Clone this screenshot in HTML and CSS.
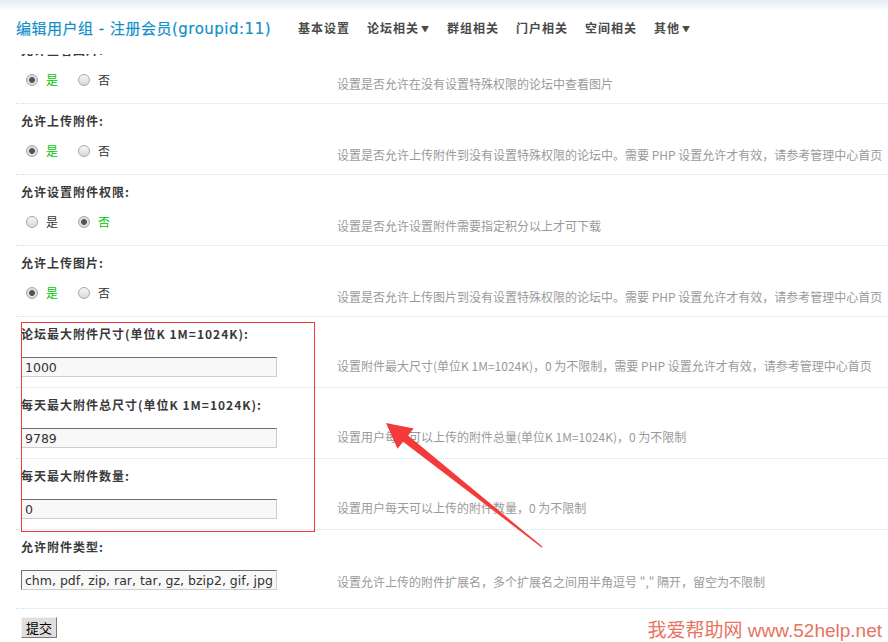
FILE: index.html
```html
<!DOCTYPE html>
<html lang="zh-CN">
<head>
<meta charset="utf-8">
<title>编辑用户组 - 注册会员</title>
<link rel="stylesheet" href="styles.css">
</head>
<body>
<header class="topbar">
  <h1 class="title">编辑用户组 - 注册会员(groupid:11)</h1>
  <nav class="nav">
    <a class="nav-item">基本设置</a>
    <a class="nav-item">论坛相关<span class="caret">▼</span></a>
    <a class="nav-item">群组相关</a>
    <a class="nav-item">门户相关</a>
    <a class="nav-item">空间相关</a>
    <a class="nav-item">其他<span class="caret">▼</span></a>
  </nav>
</header>

<main class="content">
  <form class="settings">
    <div class="setting setting--radio">
      <div class="setting-label">允许查看图片:</div>
      <div class="setting-value">
        <label class="radio is-on"><input type="radio" name="viewimg" checked><span>是</span></label>
        <label class="radio"><input type="radio" name="viewimg"><span>否</span></label>
      </div>
      <div class="setting-desc">设置是否允许在没有设置特殊权限的论坛中查看图片</div>
    </div>

    <div class="setting setting--radio">
      <div class="setting-label">允许上传附件:</div>
      <div class="setting-value">
        <label class="radio is-on"><input type="radio" name="postattach" checked><span>是</span></label>
        <label class="radio"><input type="radio" name="postattach"><span>否</span></label>
      </div>
      <div class="setting-desc">设置是否允许上传附件到没有设置特殊权限的论坛中。需要 PHP 设置允许才有效，请参考管理中心首页</div>
    </div>

    <div class="setting setting--radio">
      <div class="setting-label">允许设置附件权限:</div>
      <div class="setting-value">
        <label class="radio"><input type="radio" name="setattachperm"><span>是</span></label>
        <label class="radio is-on"><input type="radio" name="setattachperm" checked><span>否</span></label>
      </div>
      <div class="setting-desc">设置是否允许设置附件需要指定积分以上才可下载</div>
    </div>

    <div class="setting setting--radio">
      <div class="setting-label">允许上传图片:</div>
      <div class="setting-value">
        <label class="radio is-on"><input type="radio" name="postimage" checked><span>是</span></label>
        <label class="radio"><input type="radio" name="postimage"><span>否</span></label>
      </div>
      <div class="setting-desc">设置是否允许上传图片到没有设置特殊权限的论坛中。需要 PHP 设置允许才有效，请参考管理中心首页</div>
    </div>

    <div class="setting setting--input">
      <div class="setting-label">论坛最大附件尺寸(单位K 1M=1024K):</div>
      <div class="setting-value"><input class="text-input" type="text" value="1000"></div>
      <div class="setting-desc">设置附件最大尺寸(单位K 1M=1024K)，0 为不限制，需要 PHP 设置允许才有效，请参考管理中心首页</div>
    </div>

    <div class="setting setting--input">
      <div class="setting-label">每天最大附件总尺寸(单位K 1M=1024K):</div>
      <div class="setting-value"><input class="text-input" type="text" value="9789"></div>
      <div class="setting-desc">设置用户每天可以上传的附件总量(单位K 1M=1024K)，0 为不限制</div>
    </div>

    <div class="setting setting--input">
      <div class="setting-label">每天最大附件数量:</div>
      <div class="setting-value"><input class="text-input" type="text" value="0"></div>
      <div class="setting-desc">设置用户每天可以上传的附件数量，0 为不限制</div>
    </div>

    <div class="setting setting--input setting--tall">
      <div class="setting-label">允许附件类型:</div>
      <div class="setting-value"><input class="text-input" type="text" value="chm, pdf, zip, rar, tar, gz, bzip2, gif, jpg, jpeg, png"></div>
      <div class="setting-desc">设置允许上传的附件扩展名，多个扩展名之间用半角逗号 "," 隔开，留空为不限制</div>
    </div>

    <div class="footer">
      <button class="submit" type="button">提交</button>
      <span class="watermark">我爱帮助网 www.52help.net</span>
    </div>
  </form>
</main>

<div class="highlight-box"></div>
<svg class="arrow" viewBox="0 0 888 642" width="888" height="642" aria-hidden="true">
  <polygon points="386,423 413.7,428.4 408.1,435.5 542.4,546.6 541.6,547.4 403.1,441.7 397.5,448.8" fill="#f43a3a"/>
</svg>
</body>
</html>
```

FILE: styles.css
```css
html, body {
  margin: 0;
  padding: 0;
  width: 888px;
  height: 642px;
  overflow: hidden;
  background: #fff;
}

body {
  font-family: "Noto Sans CJK SC", "DejaVu Sans", sans-serif;
  font-size: 12px;
  color: #333;
  position: relative;
}

/* ---------- top bar ---------- */
.topbar {
  position: fixed;
  top: 0;
  left: 0;
  right: 0;
  height: 54px;
  padding: 0 0 0 16px;
  display: flex;
  align-items: center;
  background: linear-gradient(#e2ebf5 0, #fff 11px);
  z-index: 5;
  box-sizing: border-box;
}

.title {
  margin: 0;
  width: 282px;
  flex: none;
  font-family: "DejaVu Sans", "Noto Sans CJK SC", sans-serif;
  font-size: 15px;
  font-weight: normal;
  color: #138fc8;
  white-space: nowrap;
  letter-spacing: 0.5px;
  -webkit-text-stroke: 0.2px #138fc8;
}

.nav {
  display: flex;
  gap: 17px;
}

.nav-item {
  font-size: 12px;
  font-weight: bold;
  color: #4a4a4a;
  letter-spacing: 1px;
  white-space: nowrap;
}

.caret {
  font-size: 8px;
  margin-left: 2px;
  vertical-align: 1px;
}

/* ---------- settings ---------- */
.content {
  padding: 33px 0 0 16px;
}

.setting {
  display: grid;
  grid-template-columns: 315px 1fr;
  grid-template-rows: 24px 1fr;
  height: 70px;
  border-bottom: 1px dotted #c6e2f3;
}

.setting--tall {
  height: 78px;
}

.setting-label {
  grid-column: 1 / -1;
  padding: 10px 0 0 5px;
  line-height: 14px;
  font-weight: bold;
  letter-spacing: 1px;
  color: #3a3a3a;
  white-space: nowrap;
}

.setting-value {
  padding: 16px 0 0 5px;
  display: flex;
  align-items: flex-start;
  gap: 15px;
}

.setting-desc {
  padding: 20px 0 0 6px;
  line-height: 14px;
  color: #9a9a9a;
  white-space: nowrap;
  overflow: hidden;
}

.setting--input .setting-desc {
  padding-top: 18px;
}

.setting--tall .setting-desc {
  padding-top: 21px;
}

/* radio */
.radio {
  display: flex;
  align-items: center;
  gap: 8px;
  line-height: 14px;
  color: #333;
}

.radio input {
  appearance: none;
  -webkit-appearance: none;
  margin: 0 0 0 5px;
  width: 12px;
  height: 12px;
  border-radius: 50%;
  border: 1px solid #a9a9a9;
  background: linear-gradient(#f6f6f6, #d9d9d9);
  box-sizing: border-box;
}

.radio input:checked {
  background: radial-gradient(circle, #555 0, #555 2.6px, #e4e4e4 3.2px, #d2d2d2 6px);
}

.radio.is-on {
  color: #00c800;
}

/* text input */
.text-input {
  width: 256px;
  height: 20px;
  box-sizing: border-box;
  margin: 0;
  padding: 0 3px;
  border: 1px solid;
  border-color: #6e6e6e #cdcdcd #cdcdcd #6e6e6e;
  background: #f8f8f8;
  font-family: "DejaVu Sans", sans-serif;
  font-size: 12.5px;
  color: #333;
  outline: none;
}

/* footer */
.footer {
  display: flex;
  align-items: flex-end;
  justify-content: space-between;
  padding: 8px 6px 0 5px;
}

.submit {
  width: 36px;
  height: 21px;
  padding: 0;
  font-family: "Noto Sans CJK SC", sans-serif;
  font-size: 13px;
  line-height: 17px;
  color: #000;
  background: #dedede;
  border: 1px solid;
  border-color: #f4f4f4 #7a7a7a #7a7a7a #f4f4f4;
}

.watermark {
  font-family: "Liberation Sans", "Noto Sans CJK SC", sans-serif;
  font-size: 19px;
  line-height: 20px;
  color: #e8735f;
  margin-bottom: -3px;
}

/* ---------- annotations ---------- */
.highlight-box {
  position: absolute;
  left: 21px;
  top: 322px;
  width: 294px;
  height: 210px;
  box-sizing: border-box;
  border: 1px solid #f03838;
  pointer-events: none;
}

.arrow {
  position: absolute;
  left: 0;
  top: 0;
  pointer-events: none;
}
```
